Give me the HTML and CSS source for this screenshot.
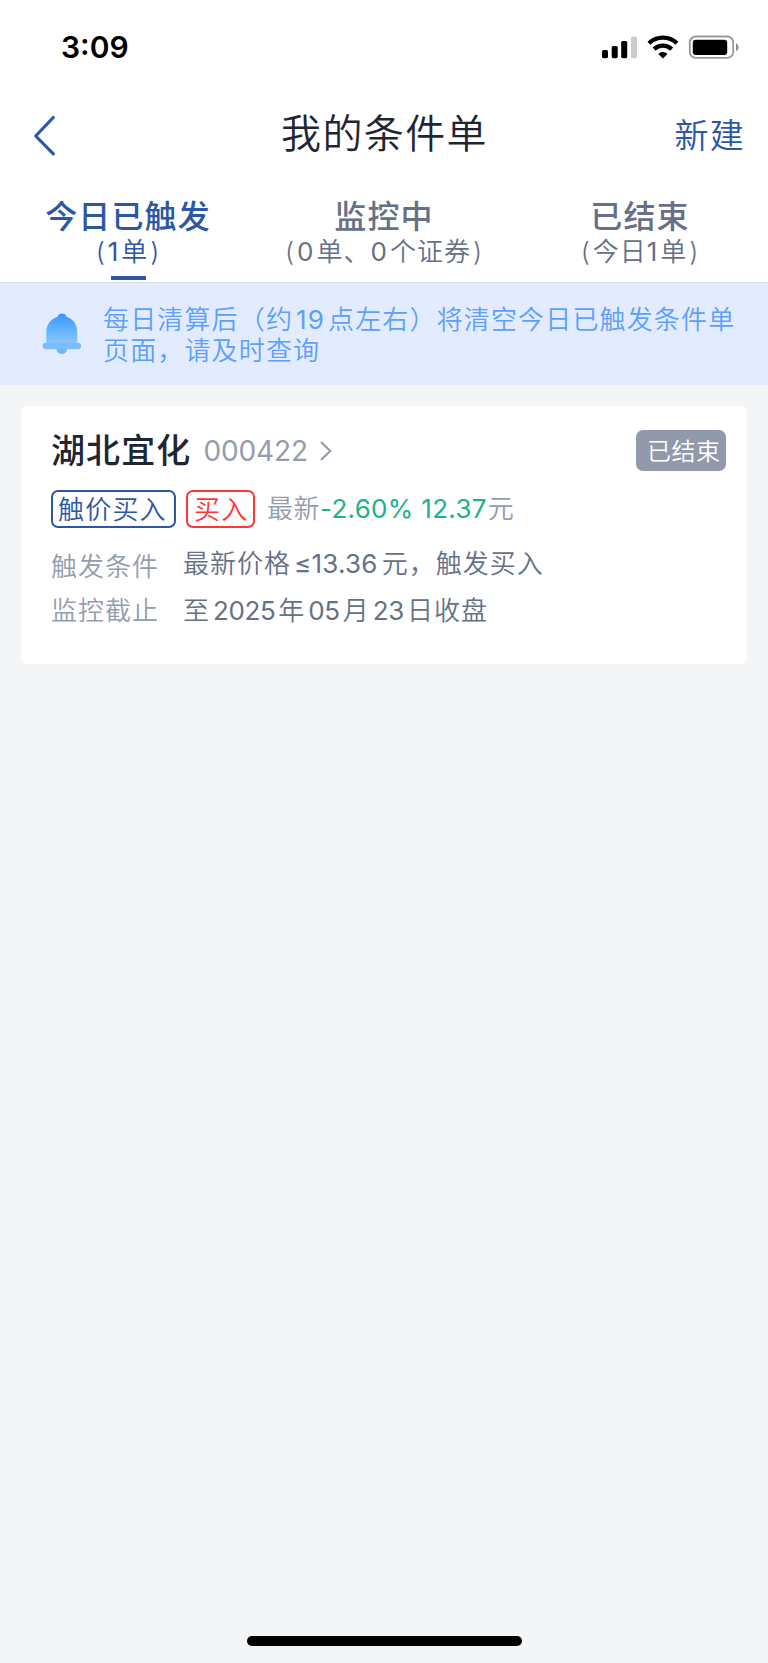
FILE: index.html
```html
<!DOCTYPE html>
<html lang="zh-CN">
<head>
<meta charset="utf-8">
<title>我的条件单</title>
<link rel="stylesheet" href="styles.css">
</head>
<body>
<div class="screen">
  <div class="status">
    <span class="time">3:09</span>
    <svg class="status-icons" width="139" height="26" viewBox="0 0 139 26">
      <rect x="0" y="15" width="6" height="8.2" rx="1.6"/>
      <rect x="9.7" y="11" width="6" height="12.2" rx="1.6"/>
      <rect x="19.2" y="6" width="6" height="17.2" rx="1.6"/>
      <rect x="29" y="1.4" width="6" height="21.8" rx="1.6" fill="#ccc"/>
      <g fill="none" stroke="#000" stroke-width="4.3">
        <path d="M46.9 8.2a20.3 20.3 0 0 1 28 0"/>
        <path d="M52.1 14.1a12.8 12.8 0 0 1 17.6 0"/>
      </g>
      <path d="M60.9 23.4l-4.6-4.5a6.5 6.5 0 0 1 9.2 0z"/>
      <rect x="87.8" y="1.5" width="43.4" height="21.4" rx="6" fill="none" stroke="#999" stroke-width="1.8"/>
      <rect x="90.8" y="4.7" width="34.4" height="15.2" rx="3"/>
      <path d="M134 8.3c3.4 1.6 3.4 6.4 0 8z" fill="#8c8c8c"/>
    </svg>
  </div>
  <header class="nav">
    <svg class="back" width="24" height="42" viewBox="0 0 24 42"><path d="M20.3 2.5L2.7 21l17.6 17.8" fill="none" stroke="#2c57a4" stroke-width="3.2" stroke-linecap="round" stroke-linejoin="round"/></svg>
    <h1 class="title">我的条件单</h1>
    <span class="new">新建</span>
  </header>
  <nav class="tabs">
    <div class="tab active"><b class="tab-name">今日已触发</b><span class="tab-sub"><i class="paren-l">(</i><i class="n">1</i>单<i class="paren-r">)</i></span></div>
    <div class="tab"><b class="tab-name">监控中</b><span class="tab-sub"><i class="paren-l">(</i><i class="n">0</i>单、<i class="n">0</i>个证券<i class="paren-r">)</i></span></div>
    <div class="tab"><b class="tab-name">已结束</b><span class="tab-sub"><i class="paren-l">(</i>今日<i class="n">1</i>单<i class="paren-r">)</i></span></div>
  </nav>
  <div class="notice">
    <svg class="bell" width="40" height="42" viewBox="0 0 40 42">
      <defs><linearGradient id="bell" x1="0" y1="0" x2="0" y2="1"><stop offset="0" stop-color="#3598ff"/><stop offset="1" stop-color="#8cc8ff"/></linearGradient></defs>
      <path d="M14.5 35.5h10.600a5.300 5.600 0 0 1-10.600 0z" fill="#72b6ff"/>
      <path d="M15.600 3.700C16.500-.5 23.500-.5 24.500 3.700 31 5.800 35.300 11.500 35.300 19V31H4.300V19C4.300 11.500 9 5.800 15.600 3.700z" fill="url(#bell)"/>
      <rect x=".6" y="29.800" width="38.600" height="6.400" rx="3.200" fill="#7cbcff"/>
    </svg>
    <p class="notice-text">每日清算后（约<i class="n wide">19</i>点左右）将清空今日已触发条件单<br>页面，请及时查询</p>
  </div>
  <section class="card">
    <div class="head">
      <b class="name">湖北宜化</b>
      <span class="code">000422</span>
      <svg class="more" width="14" height="22" viewBox="0 0 14 22"><path d="M2 2l9.300 9L2 20" fill="none" stroke="#959cad" stroke-width="2.200"/></svg>
      <span class="badge">已结束</span>
    </div>
    <div class="quote">
      <span class="tag blue">触价买入</span>
      <span class="tag red">买入</span>
      <span class="latest">最新</span><span class="price">-2.60% 12.37</span><span class="unit">元</span>
    </div>
    <dl class="row first"><dt>触发条件</dt><dd>最新价格<i class="n cond">≤13.36</i>元，触发买入</dd></dl>
    <dl class="row"><dt>监控截止</dt><dd>至<i class="n date">2025</i>年<i class="n date">05</i>月<i class="n date">23</i>日收盘</dd></dl>
  </section>
  <div class="home"></div>
</div>
</body>
</html>
```
FILE: styles.css
```css
* { box-sizing: border-box; margin: 0; padding: 0; }
body { font-family: Inter, "Noto Sans CJK SC", sans-serif; background: #f3f5f7; }
i { font-style: normal; }
.screen { width: 768px; height: 1663px; display: flex; flex-direction: column; white-space: nowrap; overflow: hidden; }
.status { height: 94px; background: #fff; display: flex; justify-content: space-between; align-items: flex-start; padding: 30px 27px 0 61px; }
.time { font-size: 30px; font-weight: 600; line-height: 35px; }
.status-icons { margin-top: 5px; }
.nav { height: 90px; background: #fff; display: grid; grid-template-columns: 1fr auto 1fr; padding: 0 23px 0 33px; }
.back { margin-top: 21px; }
.title { font-size: 40px; font-weight: 350; line-height: 80px; letter-spacing: 1.4px; margin-left: -9px; color: #1f2533; }
.new { justify-self: end; font-size: 34px; font-weight: 350; line-height: 84px; letter-spacing: 1.3px; color: #2c57a4; }
.tabs { height: 99px; background: #fff; display: grid; grid-template-columns: repeat(3, 1fr); border-bottom: 1px solid #d9dde6; }
.tab { display: flex; flex-direction: column; align-items: center; padding-top: 13px; color: #667086; }
.tab-name { font-size: 32px; font-weight: 500; line-height: 40px; letter-spacing: 1.1px; }
.tab-sub { font-size: 26px; font-weight: 350; line-height: 29px; letter-spacing: 1px; }
.paren-l { margin-right: 2px; }
.paren-r { margin-left: 2px; }
.active { color: #2c57a4; }
.active::after { content: ""; width: 35px; height: 4px; margin-top: 10px; background: #2c57a4; }
.n { font-weight: 400; margin: 0 3px 0 1px; }
.tab-sub .n { margin: 0 2px 0 0; }
.notice-text .wide { margin: 0 3px; }
.notice { height: 102px; background: #e3ecfe; display: flex; padding: 20px 0 0 42px; }
.bell { margin-top: 10px; margin-right: 21px; }
.notice-text { font-size: 26px; font-weight: 350; line-height: 31px; padding-top: 1px; letter-spacing: 1.15px; color: #5c9fff; }
.card { margin: 21px 21px 0; height: 258px; background: #fff; border-radius: 7px; padding: 23px 21px 0 30px; }
.head { display: flex; height: 44px; align-items: center; }
.name { font-size: 34px; font-weight: 500; letter-spacing: 1.1px; color: #1f2533; line-height: 40px; }
.code { margin-left: 12px; font-size: 28px; font-weight: 400; color: #959cad; line-height: 44px; letter-spacing: -.1px; }
.more { margin-left: 11px; }
.badge { margin: -1px 0 0 auto; width: 90px; height: 41px; padding-left: 11px; border-radius: 7px; background: #9299aa; color: #fff; font-size: 24px; font-weight: 350; line-height: 43px; letter-spacing: .5px; }
.quote { display: flex; margin-top: 17px; height: 38px; line-height: 38px; font-size: 26px; font-weight: 350; color: #959cad; }
.tag { height: 38px; border: 2px solid; border-radius: 7px; line-height: 35px; letter-spacing: 1.2px; padding-left: 5px; }
.blue { width: 125px; color: #2c57a4; }
.red { width: 69px; color: #ff3535; margin: 0 12px 0 10px; padding-left: 6px; }
.latest { letter-spacing: .5px; }
.price { color: #22b08c; font-weight: 400; letter-spacing: .3px; }
.unit { margin-left: 1px; }
.row { display: flex; font-size: 26px; font-weight: 350; line-height: 32px; letter-spacing: 1px; color: #667086; margin-top: 15px; }
.row.first { margin-top: 20px; }
.row.first dt { padding-top: 3px; margin-bottom: -3px; }
.row dt { width: 132px; color: #959cad; }
.row .cond { margin: 0 4px 0 3px; letter-spacing: .25px; }
.row .date { margin: 0 3px; letter-spacing: -.4px; }
.home { width: 275px; height: 10px; margin: auto auto 17px 247px; border-radius: 5px; background: #000; }
```
